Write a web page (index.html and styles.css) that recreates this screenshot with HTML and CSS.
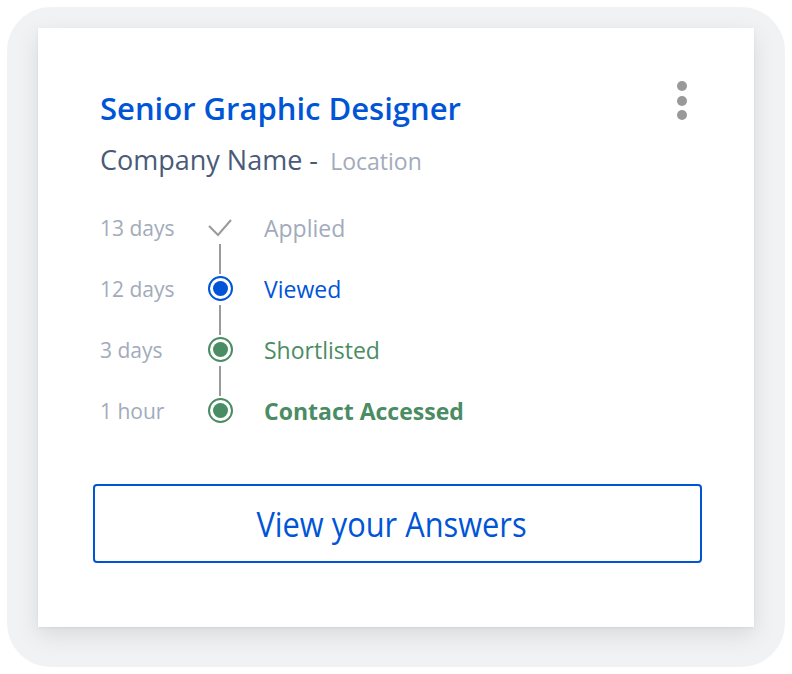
FILE: index.html
```html
<!DOCTYPE html>
<html>
<head>
<meta charset="utf-8">
<link rel="stylesheet" href="styles.css">
</head>
<body>
<div class="frame">
  <div class="card">
    <div class="head">
      <div class="titles">
        <h1 class="title">Senior Graphic Designer</h1>
        <div class="sub"><span class="company">Company Name -</span> <span class="location">Location</span></div>
      </div>
      <div class="kebab"><span></span><span></span><span></span></div>
    </div>
    <div class="timeline">
      <div class="row">
        <div class="time">13 days</div>
        <div class="mark">
          <svg width="26" height="26" viewBox="0 0 26 26"><path d="M2 11 L11 20 L24 5" fill="none" stroke="#9a9a9a" stroke-width="2"/></svg>
        </div>
        <div class="label applied">Applied</div>
      </div>
      <div class="row">
        <div class="time">12 days</div>
        <div class="mark line"><span class="dot blue"></span></div>
        <div class="label viewed">Viewed</div>
      </div>
      <div class="row">
        <div class="time">3 days</div>
        <div class="mark line"><span class="dot green"></span></div>
        <div class="label short">Shortlisted</div>
      </div>
      <div class="row">
        <div class="time">1 hour</div>
        <div class="mark line"><span class="dot green"></span></div>
        <div class="label contact">Contact Accessed</div>
      </div>
    </div>
    <button class="answers"><span class="answers-text">View your Answers</span></button>
  </div>
</div>
</body>
</html>
```
FILE: styles.css
```css
html, body { margin: 0; padding: 0; background: #ffffff; }
body { font-family: "Open Sans", "Noto Sans", sans-serif; }
.frame {
  margin: 7px;
  width: 778px;
  height: 660px;
  box-sizing: border-box;
  padding: 21px 31px 0 31px;
  background: #f1f2f4;
  border-radius: 44px;
}
.card {
  background: #ffffff;
  height: 599px;
  box-sizing: border-box;
  padding: 60px 53px 0 55px;
  box-shadow: 0 8px 22px rgba(0,0,0,0.10), 0 1px 3px rgba(0,0,0,0.06);
}
.head { display: flex; justify-content: space-between; padding-left: 7px; }
.title {
  margin: 0;
  font-size: 31px;
  font-weight: 600;
  color: #0055d6;
  line-height: 40px;
}
.sub { margin-top: 16px; line-height: 32px; white-space: nowrap; }
.company { font-size: 27px; color: #4a5a78; }
.location { font-size: 23px; color: #a2abbb; margin-left: 8px; }
.kebab { display: flex; flex-direction: column; gap: 4.5px; margin-top: -7px; margin-right: 14px; }
.kebab span { width: 10px; height: 10px; border-radius: 50%; background: #999999; }
.timeline { margin-top: 17px; padding-left: 7px; }
.row { display: flex; align-items: center; height: 61px; }
.time { width: 107px; font-size: 21px; color: #a2abbb; }
.mark { width: 26px; height: 26px; display: flex; justify-content: center; align-items: center; position: relative; margin-right: 31px; }
.mark svg { display: block; }
.mark.line::before {
  content: "";
  position: absolute;
  left: 12px;
  top: -32px;
  width: 2px;
  height: 30px;
  background: #9a9a9a;
}
.dot {
  width: 25px; height: 25px; border-radius: 50%;
  box-sizing: border-box; border: 2px solid; padding: 3px;
  background-clip: content-box;
}
.dot.blue { border-color: #0055d6; background-color: #0055d6; }
.dot.green { border-color: #4a8c63; background-color: #4a8c63; }
.label { font-size: 23px; }
.applied { color: #a2abbb; }
.viewed { color: #0055d6; }
.short { color: #4a8c63; }
.contact { color: #4a8c63; font-weight: 700; }
.answers {
  display: flex;
  justify-content: center;
  align-items: center;
  margin-top: 43px;
  width: 609px;
  height: 79px;
  box-sizing: border-box;
  border: 2px solid #0055d6;
  border-radius: 4px;
  background: #fff;
  color: #0055d6;
  font-family: "Open Sans", "Noto Sans", sans-serif;
  font-size: 35px;
  padding: 0 11px 0 0;
}
.answers-text { display: inline-block; transform: scaleX(0.88); white-space: nowrap; }
```
